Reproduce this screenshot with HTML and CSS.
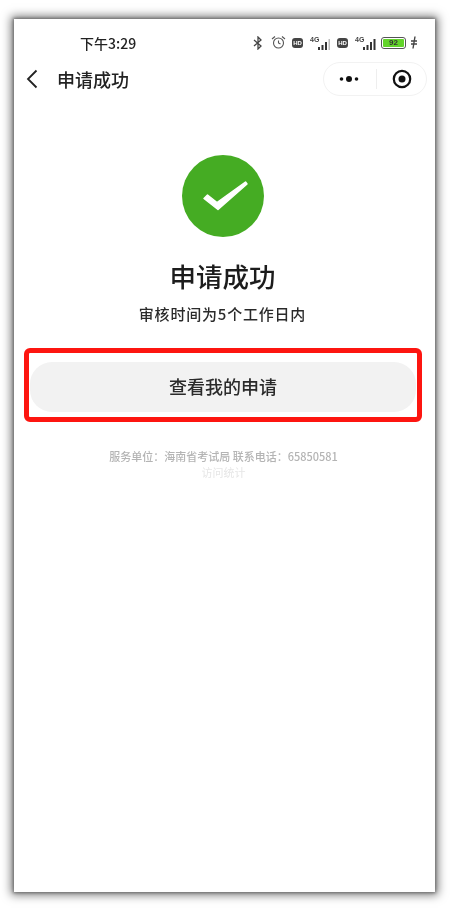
FILE: index.html
```html
<!DOCTYPE html>
<html lang="zh-CN">
<head>
<meta charset="utf-8">
<title>申请成功</title>
<link rel="stylesheet" href="styles.css">
</head>
<body>
<main class="screen">
  <div class="status">
    <span class="time">下午3:29</span>
    <div class="status-icons">
      <svg class="i bt" width="10" height="14" viewBox="0 0 10 14"><path d="M1 4l7 6-3 3V1l3 3-7 6" fill="none" stroke="#444" stroke-width="1.3"/></svg>
      <svg class="i" width="15" height="15" viewBox="0 0 15 15"><circle cx="7.5" cy="8" r="5" fill="none" stroke="#555" stroke-width="1.1"/><path d="M7.5 5.5V8l2 1M1 4l3-2.500M14 4l-3-2.500" fill="none" stroke="#555" stroke-width="1.1"/></svg>
      <span class="hd">HD</span>
      <span class="net"><span class="net-t">4G</span><svg width="14" height="11" viewBox="0 0 14 11"><path d="M1 8h2v3H1zM4.500 6h2v5h-2zM8 3h2v8H8z" fill="#333"/><path d="M11.500 0h1.500v11h-1.500z" fill="#bbb"/></svg></span>
      <span class="hd">HD</span>
      <span class="net"><span class="net-t">4G</span><svg width="14" height="11" viewBox="0 0 14 11"><path d="M1 8h2v3H1zM4.500 6h2v5h-2zM8 3h2v8H8zM11.500 0h2v11h-2z" fill="#333"/></svg></span>
      <span class="batt"><span class="batt-v">92</span></span>
      <svg class="i bolt" width="8" height="13" viewBox="0 0 8 13"><path d="M5 .5L3 12.500M1 5h6M1 8h6" fill="none" stroke="#444" stroke-width="1.400"/></svg>
    </div>
  </div>
  <header class="nav">
    <svg class="back" width="12" height="20" viewBox="0 0 12 20"><path d="M10.500 1.500L2 10l8.500 8.500" fill="none" stroke="#222" stroke-width="1.800"/></svg>
    <h1 class="nav-title">申请成功</h1>
    <div class="capsule">
      <svg width="22" height="8" viewBox="0 0 22 8"><circle cx="2.500" cy="4" r="1.800" fill="#111"/><circle cx="10" cy="4" r="3" fill="#111"/><circle cx="17.500" cy="4" r="1.800" fill="#111"/></svg>
      <span class="sep"></span>
      <svg width="20" height="20" viewBox="0 0 20 20"><circle cx="10" cy="10" r="8.200" fill="none" stroke="#111" stroke-width="2.200"/><circle cx="10" cy="10" r="3.500" fill="#111"/></svg>
    </div>
  </header>
  <section class="result">
    <svg class="ok" width="82" height="82" viewBox="0 0 82 82"><circle cx="41" cy="41" r="41" fill="#45ac23"/><path d="M22 43.500L25.500 40 35 47.500 63.500 27 65 29 36 54.500z" fill="#fff" stroke="#fff" stroke-width="1.500" stroke-linejoin="round"/></svg>
    <h2 class="res-title">申请成功</h2>
    <p class="res-sub">审核时间为5个工作日内</p>
  </section>
  <div class="mark">
    <button class="view-btn">查看我的申请</button>
  </div>
  <footer class="foot">
    <p class="foot-a">服务单位：海南省考试局 联系电话：65850581</p>
    <p class="foot-b">访问统计</p>
  </footer>
</main>
</body>
</html>
```

FILE: styles.css
```css
* { box-sizing: border-box; }
html, body { margin: 0; height: 100%; background: #fff; overflow: hidden; }
body { padding: 19px 15px 19px 14px; font-family: "Noto Sans CJK SC", "Noto Sans", sans-serif; }
h1, h2, p { margin: 0; font-weight: 400; }
.screen {
  height: 873px;
  background: #fff;
  box-shadow: 0 0 9px 3px rgba(0,0,0,.5), 0 0 3px 1px rgba(0,0,0,.35);
  display: flex;
  flex-direction: column;
  filter: blur(.45px);
}
.status { height: 33px; padding: 14px 17px 0 66px; display: flex; justify-content: space-between; align-items: center; }
.time { font: 500 14px/18px "Noto Sans CJK SC", sans-serif; color: #222; }
.status-icons { display: flex; align-items: center; gap: 4px; }
.i { display: block; }
.bt { margin-right: 4px; }
.hd { width: 11px; height: 10px; border-radius: 3px; background: #444; color: #fff; font: 700 6px/10px "Liberation Sans", sans-serif; text-align: center; margin: 0 2px; }
.net { display: flex; align-items: flex-start; width: 22px; height: 14px; position: relative; justify-content: flex-end; }
.net svg { margin-top: 3px; }
.net-t { font: 700 7px/8px "Liberation Sans", sans-serif; color: #444; position: absolute; left: 1px; top: 0; }
.batt { width: 25px; height: 12px; border: 1.5px solid #555; border-radius: 3px; padding: 1px; margin-left: 1px; display: flex; }
.batt-v { flex: 1; background: #62d42a; border-radius: 1px; color: #333; font: 700 8px/7px "Liberation Sans", sans-serif; text-align: center; }
.bolt { margin-left: 0; }
.nav { height: 46px; display: flex; align-items: center; padding: 0 8px 0 12px; margin-top: 4px; }
.back { flex: none; }
.nav-title { font-size: 18px; font-weight: 500; line-height: 24px; color: #222; margin-left: 19px; flex: 1; }
.capsule { width: 104px; height: 34px; border: 1px solid #f2f2f2; border-radius: 17px; display: flex; align-items: center; justify-content: space-between; padding: 0 14px 0 15px; }
.sep { width: 1px; height: 20px; background: #eee; }
.result { display: flex; flex-direction: column; align-items: center; padding-top: 53px; padding-right: 4px; }
.ok { display: block; }
.res-title { font-size: 26.5px; font-weight: 500; line-height: 36px; color: #1c1c1c; margin-top: 21px; }
.res-sub { font-size: 15px; font-weight: 500; line-height: 20px; color: #2a2a2a; margin-top: 10px; letter-spacing: .8px; }
.mark { margin: 24px 13px 0 10px; height: 74px; border: 5px solid #fd1510; border-radius: 6px; padding: 9px 1px 5px 1px; }
.view-btn { display: block; width: 100%; height: 50px; border: 0; border-radius: 22px; background: #f2f2f2; color: #2a2a2a; font: 500 18px/24px "Noto Sans CJK SC", sans-serif; padding: 0 0 2px; }
.foot { text-align: center; padding-top: 26px; padding-right: 2px; }
.foot-a { font-size: 11px; font-weight: 500; line-height: 16px; color: #b4b4b4; }
.foot-b { font-size: 11px; line-height: 16px; color: #e6e6e6; }
```
